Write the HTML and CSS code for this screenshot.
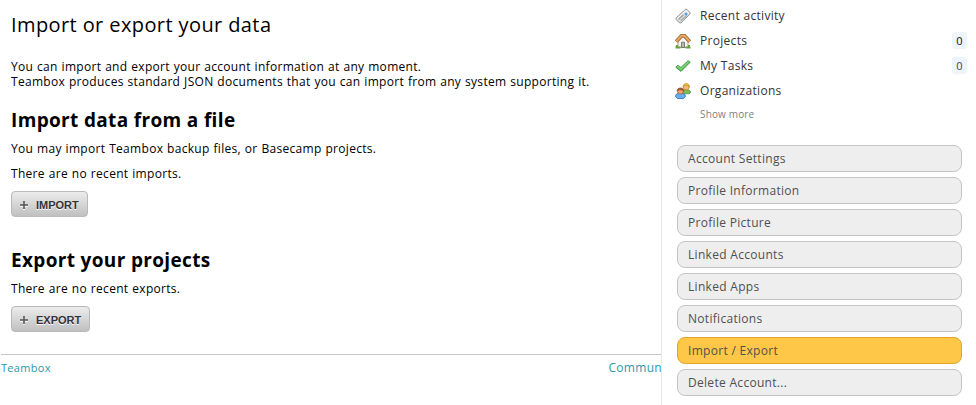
FILE: index.html
```html
<!DOCTYPE html>
<html lang="en">
<head>
<meta charset="utf-8">
<title>Import or export your data</title>
<link rel="stylesheet" href="styles.css">
</head>
<body>
<div class="page">
  <div class="main">
    <main class="content">
      <h1>Import or export your data</h1>
      <p class="intro">You can import and export your account information at any moment.<br>Teambox produces standard JSON documents that you can import from any system supporting it.</p>
      <section class="import">
        <h2>Import data from a file</h2>
        <p>You may import Teambox backup files, or Basecamp projects.</p>
        <p>There are no recent imports.</p>
        <button class="button" type="button"><svg class="plus" viewBox="0 0 8 8"><path d="M4 0v8M0 4h8"/></svg>IMPORT</button>
      </section>
      <section class="export">
        <h2>Export your projects</h2>
        <p>There are no recent exports.</p>
        <button class="button" type="button"><svg class="plus" viewBox="0 0 8 8"><path d="M4 0v8M0 4h8"/></svg>EXPORT</button>
      </section>
    </main>
    <footer class="footer"><a class="brand">Teambox</a><a class="community">Commun</a></footer>
  </div>
  <aside class="sidebar">
    <ul class="nav">
      <li>
        <svg class="icon" viewBox="0 0 16 16"><path d="M1 10 10.500 1.200l1.600.3 3 3.200-.2 1.300L6 15l-2-.5-2.800-3z" fill="#dcdfe2" stroke="#8f8f8f" stroke-width=".9"/><path d="M2 10.800 10.800 2.500 14 5.500" fill="none" stroke="#fff"/><path d="M3.500 11.500 8.500 6.800M5.700 12.900l5.800-5.300" stroke="#a0a0a0" stroke-width="1.200"/><path d="m10.200 5.200 1.800 1.700" stroke="#4b99dc" stroke-width="2.200"/></svg>
        <span>Recent activity</span>
      </li>
      <li>
        <svg class="icon" viewBox="0 0 16 16"><path d="M3 8.500 8 3.500l5 5v6H3z" fill="#f5f3ee" stroke="#a28e78" stroke-width=".8"/><path d="M6.500 9.300h3v5.200h-3z" fill="#b8b8b8" stroke="#656565" stroke-width=".8"/><path d="M1.200 8.600 6.500 2.800h3l5.300 5.800" fill="none" stroke="#8c5423" stroke-width="3.600"/><path d="M1.200 8.500 6.700 2.700h2.600l5.500 5.800" fill="none" stroke="#e8a862" stroke-width="2.200"/><path d="M.5 14.500h5M10.500 14.500h5M1 13h2M13 13h2" stroke="#69a03e" stroke-width="1.800"/></svg>
        <span>Projects</span><b class="count">0</b>
      </li>
      <li>
        <svg class="icon" viewBox="0 0 16 16"><path d="M.8 9.200 2.900 7.300l3 2.300 7.200-6.900 2.100 1.500L6 13.400z" fill="#65c565" stroke="#349338" stroke-width=".9"/><path d="m2 9 1-.7 3 2.500 7.300-7" fill="none" stroke="#9ce093" stroke-width=".8"/></svg>
        <span>My Tasks</span><b class="count muted">0</b>
      </li>
      <li>
        <svg class="icon" viewBox="0 0 16 16"><path d="M6.500 9.700c0-2.200 1.700-3.200 4.500-3.200s4.500 1 4.500 3.200l-1.800 1.100H8z" fill="#76bd55" stroke="#4a903a" stroke-width=".8"/><circle cx="11.200" cy="4" r="3" fill="#f1b67d" stroke="#bd8b24" stroke-width=".8"/><path d="M8 4C7.800-.6 14.700-.5 14.400 4c-.8-2-3.400-1.500-4.500-1.700z" fill="#ebc542" stroke="#b98b21" stroke-width=".6"/><path d="M.5 13.600c0-2.500 1.900-3.500 5-3.500s5 1 5 3.500l-2.100 1.900H2.500z" fill="#65aef0" stroke="#286bb5" stroke-width=".8"/><circle cx="5.500" cy="8.200" r="2.900" fill="#f0a276" stroke="#a65a35" stroke-width=".8"/><path d="M2.300 8.200C1.900 3.900 9 3.900 8.700 8.200 7.800 6.500 5.500 7 4.300 6.700z" fill="#a5592f" stroke="#83451f" stroke-width=".6"/></svg>
        <span>Organizations</span>
      </li>
    </ul>
    <a class="more">Show more</a>
    <nav class="settings">
      <a>Account Settings</a>
      <a>Profile Information</a>
      <a>Profile Picture</a>
      <a>Linked Accounts</a>
      <a>Linked Apps</a>
      <a>Notifications</a>
      <a class="active">Import / Export</a>
      <a>Delete Account...</a>
    </nav>
  </aside>
</div>
</body>
</html>
```
FILE: styles.css
```css
* { box-sizing: border-box; }
body {
  margin: 0;
  background: #fff;
  color: #000;
  font: 12px/15px "Lucida Grande", "Open Sans", sans-serif;
  letter-spacing: .3px;
}
.page {
  display: flex;
  height: 405px;
  overflow: hidden;
}
.main {
  display: flex;
  flex-direction: column;
  width: 661px;
}
.content {
  height: 354px;
  padding: 11px 11px 0;
}
h1 {
  margin: 0;
  font-size: 20px;
  font-weight: 400;
  line-height: 28px;
  letter-spacing: .4px;
}
h2 {
  margin: 0 0 9px;
  font-size: 19px;
  line-height: 24px;
  letter-spacing: .34px;
}
p {
  margin: 0 0 10px;
  word-spacing: .45px;
}
.intro { margin: 20px 0 19px; white-space: nowrap; }
.import { height: 140px; }
.button {
  display: flex;
  align-items: center;
  height: 26px;
  margin: 0;
  padding: 2px 9px 0 8px;
  border: 1px solid #b9b9b9;
  border-radius: 4px;
  background: linear-gradient(#ececec, #c0c0c0);
  color: #333;
  font: bold 11px/14px "Liberation Sans", sans-serif;
  letter-spacing: 0;
  text-shadow: 0 1px 0 #fff;
}
.plus {
  width: 8px;
  height: 8px;
  margin-right: 8px;
  fill: none;
  stroke: #555;
  stroke-width: 1.6;
  filter: drop-shadow(0 1px 0 #fff);
}
.button { padding-right: 8px; }
.footer {
  display: flex;
  justify-content: space-between;
  height: 51px;
  margin-left: 1px;
  padding-top: 5px;
  border-top: 1px solid #c6c6c6;
  color: #2899aa;
}
.brand { font-size: 11px; }
.community { margin-right: -1px; }
.sidebar {
  width: 315px;
  padding-top: 3px;
  border-left: 1px solid #e8e8e8;
}
.nav {
  margin: 0;
  padding: 0 9px 0 13px;
  list-style: none;
  color: #333;
}
.nav li {
  display: flex;
  align-items: center;
  height: 25px;
}
.icon {
  width: 16px;
  height: 16px;
  margin-right: 9px;
}
.count {
  width: 15px;
  height: 17px;
  margin-left: auto;
  border-radius: 3px;
  background: #edf4fa;
  color: #111;
  font-size: 11px;
  font-weight: 400;
  line-height: 18px;
  letter-spacing: 0;
  text-align: center;
}
.muted { color: #444; }
.more {
  display: block;
  height: 16px;
  margin: 3px 0 23px 38px;
  color: #808080;
  font-size: 10px;
  line-height: 16px;
  letter-spacing: .15px;
}
.settings {
  display: flex;
  flex-direction: column;
  gap: 5px;
  padding: 0 14px 0 15px;
}
.settings a {
  height: 27px;
  padding-left: 10px;
  border: 1px solid #c4c4c4;
  border-radius: 8px;
  background: #eee;
  color: #505050;
  line-height: 25px;
}
.settings .active {
  border-color: #dfa52c;
  background: #ffc747;
}
```
